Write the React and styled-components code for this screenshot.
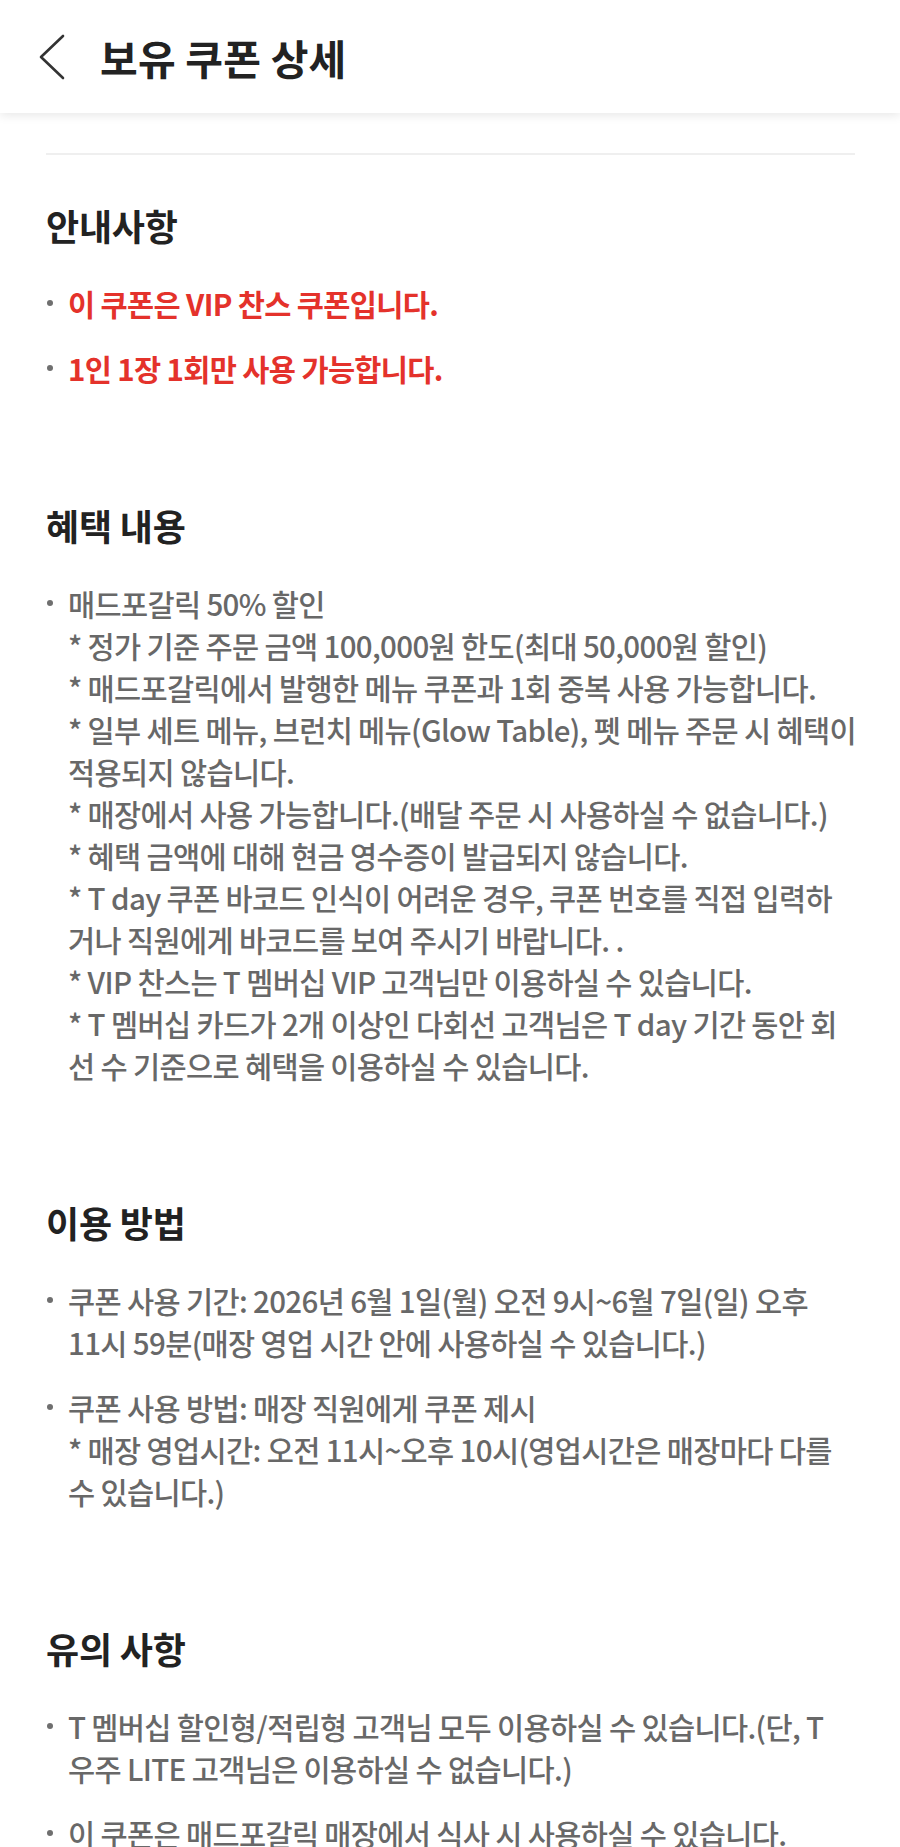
import React from 'react'
import styled, { createGlobalStyle } from 'styled-components'

const GlobalStyle = createGlobalStyle`
  html, body {
    margin: 0;
    padding: 0;
    background: #fff;
  }
  body {
    font-family: "Noto Sans CJK KR", "Noto Sans", sans-serif;
    -webkit-font-smoothing: antialiased;
  }
`

const Page = styled.div`
  width: 900px;
  min-height: 1847px;
  background: #fff;
  overflow: hidden;
`

const Header = styled.header`
  position: sticky;
  top: 0;
  height: 113px;
  display: flex;
  align-items: center;
  padding-left: 36px;
  background: #fff;
  box-shadow: 0 2px 10px rgba(0, 0, 0, 0.1);
  box-sizing: border-box;
`

const BackButton = styled.button`
  display: flex;
  align-items: center;
  justify-content: center;
  width: 30px;
  height: 48px;
  padding: 0;
  margin-right: 34px;
  border: none;
  background: none;
  cursor: pointer;
`

const Title = styled.h1`
  margin: 0;
  font-size: 41px;
  font-weight: 700;
  color: #222;
  letter-spacing: 0.2px;
`

const Content = styled.main`
  padding: 40px 45px 0 46px;
`

const Divider = styled.hr`
  margin: 0;
  border: none;
  height: 2px;
  background: #efefef;
`

const Section = styled.section`
  padding-top: ${p => (p.first ? '50px' : '93px')};
`

const SectionTitle = styled.h2`
  margin: 0 0 37px;
  font-size: 36px;
  line-height: 40px;
  font-weight: 700;
  color: #222;
  letter-spacing: -0.2px;
`

const List = styled.ul`
  margin: 0;
  padding: 0;
  list-style: none;
`

const Item = styled.li`
  position: relative;
  padding-left: 22px;
  margin-bottom: 23px;
  font-size: 29.5px;
  line-height: 42px;
  font-weight: ${p => (p.red ? 700 : 500)};
  color: ${p => (p.red ? '#e4322b' : '#686868')};
  letter-spacing: -0.65px;
  white-space: nowrap;

  &::before {
    content: '';
    position: absolute;
    left: 1px;
    top: 18px;
    width: 6px;
    height: 6px;
    border-radius: 50%;
    background: #6f6f6f;
  }
`

const ChevronLeft = () => (
  <svg width="27" height="46" viewBox="0 0 27 46" fill="none">
    <path d="M25 2 L3 23 L25 44" stroke="#333" strokeWidth="2.6" strokeLinecap="round" strokeLinejoin="round" />
  </svg>
)

// lines are broken where the app breaks them
const sections = [
  {
    title: '안내사항',
    red: true,
    items: [['이 쿠폰은 VIP 찬스 쿠폰입니다.'], ['1인 1장 1회만 사용 가능합니다.']]
  },
  {
    title: '혜택 내용',
    items: [[
      '매드포갈릭 50% 할인',
      '* 정가 기준 주문 금액 100,000원 한도(최대 50,000원 할인)',
      '* 매드포갈릭에서 발행한 메뉴 쿠폰과 1회 중복 사용 가능합니다.',
      '* 일부 세트 메뉴, 브런치 메뉴(Glow Table), 펫 메뉴 주문 시 혜택이',
      '적용되지 않습니다.',
      '* 매장에서 사용 가능합니다.(배달 주문 시 사용하실 수 없습니다.)',
      '* 혜택 금액에 대해 현금 영수증이 발급되지 않습니다.',
      '* T day 쿠폰 바코드 인식이 어려운 경우, 쿠폰 번호를 직접 입력하',
      '거나 직원에게 바코드를 보여 주시기 바랍니다. .',
      '* VIP 찬스는 T 멤버십 VIP 고객님만 이용하실 수 있습니다.',
      '* T 멤버십 카드가 2개 이상인 다회선 고객님은 T day 기간 동안 회',
      '선 수 기준으로 혜택을 이용하실 수 있습니다.'
    ]]
  },
  {
    title: '이용 방법',
    items: [
      ['쿠폰 사용 기간: 2026년 6월 1일(월) 오전 9시~6월 7일(일) 오후', '11시 59분(매장 영업 시간 안에 사용하실 수 있습니다.)'],
      ['쿠폰 사용 방법: 매장 직원에게 쿠폰 제시', '* 매장 영업시간: 오전 11시~오후 10시(영업시간은 매장마다 다를', '수 있습니다.)']
    ]
  },
  {
    title: '유의 사항',
    items: [
      ['T 멤버십 할인형/적립형 고객님 모두 이용하실 수 있습니다.(단, T', '우주 LITE 고객님은 이용하실 수 없습니다.)'],
      ['이 쿠폰은 매드포갈릭 매장에서 식사 시 사용하실 수 있습니다.']
    ]
  }
]

export default function App() {
  return (
    <Page>
      <GlobalStyle />
      <Header>
        <BackButton aria-label="뒤로">
          <ChevronLeft />
        </BackButton>
        <Title>보유 쿠폰 상세</Title>
      </Header>
      <Content>
        <Divider />
        {sections.map((s, i) => (
          <Section key={s.title} first={i === 0}>
            <SectionTitle>{s.title}</SectionTitle>
            <List>
              {s.items.map((lines, j) => (
                <Item key={j} red={s.red}>
                  {lines.map((line, k) => (
                    <React.Fragment key={k}>
                      {k > 0 && <br />}
                      {line}
                    </React.Fragment>
                  ))}
                </Item>
              ))}
            </List>
          </Section>
        ))}
      </Content>
    </Page>
  )
}
